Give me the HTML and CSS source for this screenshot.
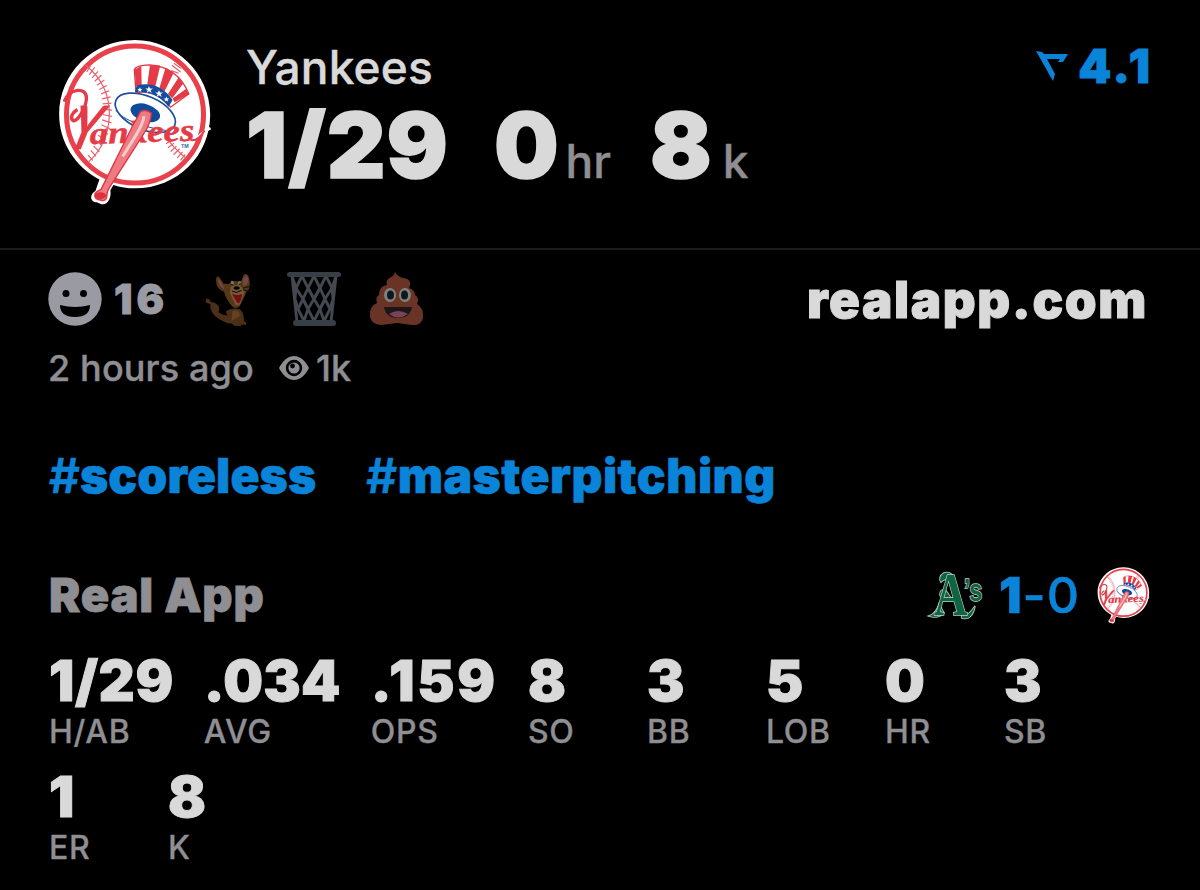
FILE: index.html
```
<!DOCTYPE html>
<html lang="en">
<head>
<meta charset="utf-8">
    <title>Yankees 1/29</title>
    <link rel="stylesheet" href="styles.css">
</head>
<body>
    <!-- shared logo, used in the header and next to the score -->
    <svg class="defs" width="0" height="0">
        <symbol id="yankees" viewBox="26 25 462 502">
            <path d="M257 28C380 28 483 130 483 252C483 377 383 474 257 474C234 474 212 471 192 464L183 480C186 500 178 522 160 522C150 522 148 516 138 516C120 512 122 490 138 482L150 447C78 410 29 335 29 252C29 128 130 28 257 28Z" fill="#fff"/>
            <circle cx="257" cy="252" r="206" fill="#fff" stroke="#e9414c" stroke-width="15"/>
            <g fill="none" stroke="#e9606a" stroke-width="3.500">
                <path d="M108 103Q180 160 180 250Q178 340 118 394"/>
                <path d="M112 124l12-20M120 132l16-22M128 142l18-20M136 152l20-18M143 164l22-16M150 177l22-12M155 190l24-9M158 205l26-6M160 220l26-2M160 236l28 3M160 252l28 6M158 268l28 9M156 283l26 12M152 298l24 13M146 314l22 14M140 330l18 16M132 346l18 18M124 360l16 18M116 374l14 16"/>
                <path d="M352 322Q372 352 412 384M368 104l26 20M374 98l22 16M366 120l22 8"/>
                <path d="M350 340l16-10M356 352l18-14M364 363l18-16M373 373l18-18M384 382l16-18M394 390l14-18"/>
            </g>
            <!-- hat -->
            <ellipse cx="288" cy="247" rx="96" ry="50" transform="rotate(23 288 247)" fill="#fff" stroke="#1e4fa0" stroke-width="5"/>
            <path d="M200 240C222 270 285 290 350 300" fill="none" stroke="#1e4fa0" stroke-width="3"/>
            <ellipse cx="288" cy="247" rx="46" ry="26" transform="rotate(18 288 247)" fill="#0f4a9b"/>
            <path d="M255 117Q260 104 300 103Q385 108 419 190L364 230Q322 176 260 186Z" fill="#fff" stroke="#e03542" stroke-width="4"/>
            <path d="M256 117L276 106L277 163L260 166ZM302 103L333 105L318 168L294 162ZM349 111L373 127L346 182L330 174ZM388 141L402 159L369 203L356 190ZM410 175L419 191L376 215L370 204Z" fill="#e43b46"/>
            <path d="M262 165Q327 148 370 208L358 229Q319 179 257 185Z" fill="#154c9e"/>
            <path d="M272 170l2 5 5 0-4 4 1 5-5-3-4 3 1-5-4-4 5 0ZM299 166l3 8 9 0-7 5 3 8-8-5-7 5 3-8-7-5 8 0ZM329 178l3 8 9 0-7 5 3 8-8-5-7 5 3-8-7-5 8 0ZM352 198l2 6 6 0-5 4 2 6-6-4-5 4 2-6-5-4 6 0Z" fill="#fff"/>
            <!-- lettering -->
            <g class="logo-script" fill="#e43b46" stroke="#e43b46">
                <text x="122" y="341" font-size="94" stroke-width="1.500" transform="rotate(-2 122 341)" textLength="314" lengthAdjust="spacingAndGlyphs">ankees</text>
                <text class="logo-y" font-size="180" stroke-width="1" transform="translate(42 356) skewX(-22)" textLength="86" lengthAdjust="spacingAndGlyphs">Y</text>
            </g>
            <path d="M44 213C60 172 112 168 111 203C110 232 82 280 69 269C60 258 73 244 84 237" fill="none" stroke="#e43b46" stroke-width="10"/>
            <path d="M440 323Q462 304 484 293" fill="none" stroke="#fff" stroke-width="7"/>
            <path d="M424 329Q447 333 466 300" fill="none" stroke="#e43b46" stroke-width="6"/>
            <!-- bat -->
            <path d="M273 244Q290 234 306 248Q305 277 282 312L180 472Q172 483 172 501Q168 514 154 509Q137 508 136 495Q136 485 155 477L252 282Q263 264 273 244Z" fill="#ee7b81" stroke="#e03542" stroke-width="4"/>
            <path d="M284 257Q282 278 260 314L220 378" fill="none" stroke="#fff" stroke-width="9" opacity=".6"/>
            <ellipse cx="153" cy="496" rx="17" ry="10" fill="#d9313e"/>
            <text x="395" y="353" class="logo-tm" font-size="16" fill="#1d6a9c">TM</text>
        </symbol>
    </svg>

    <header class="head">
        <svg class="head-logo"><use href="#yankees"/></svg>
        <div class="head-text">
            <div class="team">Yankees</div>
            <div class="line">
                <span class="big">1/29</span>
                <span class="big zero">0</span><span class="unit">hr</span>
                <span class="big eight">8</span><span class="unit unit-k">k</span>
            </div>
        </div>
        <div class="rating">
            <svg class="arrow" viewBox="0 0 32 32"><path d="M0 1L6 2L8 4H32L27 12H22L24 9H11L19 24L17 31Z" fill="#0a84d8"/></svg>
            <span>4.1</span>
        </div>
    </header>

    <section class="social">
        <div>
            <div class="reactions">
                <svg class="smile" viewBox="0 0 54 54">
                    <circle cx="27" cy="27" r="26.7" fill="#9a9aa3"/>
                    <circle cx="18" cy="21.5" r="3.5"/><circle cx="35.5" cy="21.5" r="3.5"/>
                    <path d="M12 33Q27 37 42 33Q42 45 27 45Q12 45 12 33Z"/>
                </svg>
                <span class="count">16</span>
                <svg class="mouse" viewBox="30 32 144 156">
                    <path d="M34 107Q44 108 47 117C74 120 75 139 69 147Q80 157 96 156L91 145Q109 132 133 139Q145 151 145 174Q154 178 151 186Q141 181 134 188L116 187L108 181L96 180C66 167 42 150 46 124L31 118Z" fill="#4b2f18"/>
                    <path d="M84 63Q66 30 63 47Q59 78 86 87Q91 110 111 131Q121 139 132 130Q142 111 152 87Q164 79 161 54Q157 28 143 38L135 60Q113 49 100 65Z" fill="#573719"/>
                    <path d="M69 48Q66 67 86 80Q86 67 69 48ZM147 43Q137 54 143 70Q158 69 157 49Q154 36 147 43Z" fill="#714842"/>
                    <path d="M107 66Q103 51 114 56L116 69ZM126 68Q126 51 136 57Q139 66 129 70Z" fill="#777756"/>
                    <path d="M106 72Q122 61 139 75L147 87L133 125L120 127L103 91Z" fill="#755735"/>
                    <path d="M109 93Q124 100 139 94Q135 128 124 119Z" fill="#730d10"/>
                    <ellipse cx="123" cy="76" rx="9" ry="5"/>
                    <path d="M106 65l8 3M129 66l8-3M109 85l14 4 15-6M141 77l30-8M142 82l25 5" fill="none" stroke="#15100b" stroke-width="3"/>
                    <path d="M111 144Q130 137 133 158L108 173" fill="#65411f"/>
                </svg>
                <svg class="basket" viewBox="0 0 54 54">
                    <g fill="none" stroke="#434950" stroke-width="2.800">
                        <path d="M5 4L10 50M49 4L44 50"/>
                        <path d="M15 4L9 16L16 27L11 37L17 49L21 37L16 27L21 16ZM27 4L21 16L27 27L21 37L27 49L33 37L27 27L33 16ZM39 4L33 16L38 27L33 37L37 49L43 37L38 27L45 16Z"/>
                        <path d="M5 4L9 16M49 4L45 16M21 16L27 27L33 16M16 27L21 37M38 27L33 37M9 16L8 27L11 37M45 16L46 27L43 37"/>
                    </g>
                    <rect x="0" y="0" width="54" height="5" rx="2.5" fill="#373e46"/>
                    <rect x="6" y="48" width="43" height="6" rx="3" fill="#373e46"/>
                </svg>
                <svg class="poop" viewBox="0 0 56 54">
                    <path d="M26 0Q25 4 22 5Q16 8 18 13Q10 14 10 23Q6 25 8 31Q0 34 1 45Q3 53 13 53L28 51L43 53Q52 54 54 46Q55 36 48 32Q51 26 46 23Q46 18 40 16Q44 7 34 6Q28 4 26 0Z" fill="#693425"/>
                    <ellipse cx="21" cy="23" rx="6" ry="7" fill="#82827d"/><ellipse cx="36" cy="23" rx="6" ry="7" fill="#82827d"/>
                    <ellipse cx="21.500" cy="23" rx="3.500" ry="4.500" fill="#0b1920"/><ellipse cx="35.500" cy="23" rx="3.500" ry="4.500" fill="#0b1920"/>
                    <path d="M15 35H43Q41 46 29 46Q17 46 15 35Z" fill="#1b1717"/>
                    <path d="M20 42Q29 36 39 42Q29 49 20 42Z" fill="#7c4355"/>
                </svg>
            </div>
            <div class="meta">
                <span class="ago">2 hours ago</span>
                <svg class="eye" viewBox="0 0 30 24">
                    <path d="M0 12C8-4 22-4 30 12C22 28 8 28 0 12Z" fill="#8e8e93"/>
                    <circle cx="15" cy="12" r="6.900" fill="none" stroke="#000" stroke-width="2.600"/>
                    <circle cx="13.500" cy="10" r="2.400"/>
                </svg>
                <span class="views">1k</span>
            </div>
        </div>
        <div class="site">realapp.com</div>
    </section>

    <div class="tags">
        <span><i>#</i>scoreless</span>
        <span class="wide"><i>#</i>masterpitching</span>
    </div>

    <div class="game">
        <div class="app">Real App</div>
        <div class="score">
            <svg class="athletics" viewBox="0 0 56 48">
                <g fill="#0e6542" stroke="#c1cec5" stroke-width="1.600" paint-order="stroke">
                    <path d="M25 6Q21 0 15 2Q9 6 12 11Q15 7 19 9L24 14ZM17 20Q11 17 11 24Q13 30 22 27ZM10 33Q7 43 0 45Q9 48 15 42Z"/>
                    <path d="M33 41Q37 49 46 35Q43 50 33 47Z"/>
                    <text class="as" transform="translate(5 44) scale(.76 1)" font-size="61">A<tspan class="as-s" font-size="31" dx="-5" dy="-14">’s</tspan></text>
                </g>
            </svg>
            <span class="result"><b>1</b>-0</span>
            <svg class="mini-logo"><use href="#yankees"/></svg>
        </div>
    </div>

    <div class="stats">
        <div class="stat hits"><b>1/29</b><span>H/AB</span></div>
        <div class="stat avg"><b>.034</b><span>AVG</span></div>
        <div class="stat ops"><b>.159</b><span>OPS</span></div>
        <div class="stat"><b>8</b><span>SO</span></div>
        <div class="stat"><b>3</b><span>BB</span></div>
        <div class="stat"><b>5</b><span>LOB</span></div>
        <div class="stat"><b>0</b><span>HR</span></div>
        <div class="stat"><b>3</b><span>SB</span></div>
        <div class="stat"><b>1</b><span>ER</span></div>
        <div class="stat"><b>8</b><span>K</span></div>
    </div>
</body>
</html>
```

FILE: styles.css
```
* {
    box-sizing: border-box;
}
body {
    margin: 0;
    background: #000;
    color: #d9d9d9;
    font-family: Inter, "Liberation Sans", sans-serif;
    overflow: hidden;
}
svg {
    display: block;
    flex: none;
}
.defs {
    display: none;
}
.head {
    display: flex;
    height: 250px;
    padding: 39px 47px 0 58px;
    border-bottom: 2px solid #1b1b1d;
}
.head-logo {
    width: 154px;
    height: 167px;
}
.head-text {
    flex: 1;
    padding-left: 34px;
}
.team {
    font-size: 46px;
    line-height: 56px;
    font-weight: 500;
    letter-spacing: .2px;
    -webkit-text-stroke: .4px;
}
.line {
    display: flex;
    align-items: baseline;
    margin-top: 4px;
}
.big {
    font-size: 91px;
    line-height: 92px;
    font-weight: 900;
    letter-spacing: 1px;
    -webkit-text-stroke: 1.5px;
}
.zero {
    margin-left: 45px;
}
.eight {
    margin-left: 39px;
}
.unit {
    margin-left: 6px;
    font-size: 46px;
    font-weight: 500;
    color: #8e8e93;
    -webkit-text-stroke: .4px;
}
.unit-k {
    margin-left: 10px;
}
.rating {
    display: flex;
    align-items: center;
    height: 56px;
    gap: 10px;
    color: #0a84d8;
    font-size: 47px;
    line-height: 56px;
    font-weight: 900;
    letter-spacing: 3px;
    -webkit-text-stroke: 1px;
}
.rating span {
    margin-top: -2px;
}
.arrow {
    width: 32px;
    height: 32px;
    margin-top: -3px;
}
.social {
    display: flex;
    justify-content: space-between;
    padding: 22px 52px 0 48px;
}
.reactions {
    display: flex;
    align-items: center;
    height: 54px;
}
.smile {
    width: 54px;
    height: 54px;
}
.count {
    width: 92px;
    padding-left: 12px;
    font-size: 41px;
    font-weight: 900;
    letter-spacing: 4px;
    color: #9a9aa3;
    -webkit-text-stroke: .8px;
}
.mouse {
    width: 49px;
    height: 53px;
    margin-left: 11px;
}
.basket {
    width: 54px;
    height: 54px;
    margin-left: 33px;
}
.poop {
    width: 56px;
    height: 54px;
    margin-left: 28px;
}
.meta {
    display: flex;
    align-items: center;
    margin-top: 20px;
    line-height: 44px;
    font-size: 36px;
    font-weight: 500;
    color: #8e8e93;
    letter-spacing: .15px;
    -webkit-text-stroke: .4px;
}
.eye {
    width: 30px;
    height: 24px;
    margin: 0 7px 0 25px;
}
.site {
    line-height: 56px;
    font-size: 51px;
    font-weight: 900;
    letter-spacing: 1.6px;
    -webkit-text-stroke: 1px;
}
.tags {
    display: flex;
    gap: 50px;
    padding: 56px 49px 0;
    line-height: 60px;
    font-size: 48px;
    font-weight: 900;
    letter-spacing: .1px;
    color: #0a84d8;
    -webkit-text-stroke: .6px;
}
.tags .wide {
    letter-spacing: .5px;
}
.tags i {
    font-style: normal;
    font-weight: 600;
}
.game {
    display: flex;
    justify-content: space-between;
    height: 58px;
    margin-top: 60px;
    padding: 0 50px 0 49px;
    line-height: 58px;
}
.app {
    font-size: 47px;
    font-weight: 900;
    letter-spacing: .8px;
    color: #8e8e93;
    -webkit-text-stroke: .8px;
}
.score {
    display: flex;
    align-items: center;
}
.athletics {
    width: 56px;
    height: 48px;
    overflow: visible;
}
.result {
    margin: 0 17px 0 14px;
    font-size: 50px;
    font-weight: 500;
    letter-spacing: 1px;
    color: #0a84d8;
    -webkit-text-stroke: .5px;
}
.result b {
    font-weight: 900;
}
.mini-logo {
    width: 53px;
    height: 57px;
}
.logo-script {
    font-family: "Liberation Serif", serif;
    font-style: italic;
    font-weight: bold;
}
.logo-y {
    font-family: Lato, sans-serif;
    font-style: normal;
}
.logo-tm,
.as-s {
    font-family: "Liberation Sans", sans-serif;
    font-weight: bold;
}
.as {
    font-family: "Liberation Serif", serif;
    font-weight: bold;
}
.stats {
    display: flex;
    flex-wrap: wrap;
    gap: 13px 30px;
    padding: 25px 49px 0;
}
.stat {
    min-width: 89px;
}
.stat b {
    display: block;
    line-height: 64px;
    font-size: 56px;
    font-weight: 900;
    -webkit-text-stroke: 1px;
}
.hits b {
    letter-spacing: .6px;
}
.avg b {
    letter-spacing: .3px;
}
.ops b {
    letter-spacing: 2.8px;
}
.stat span {
    display: block;
    line-height: 38px;
    padding-bottom: 1px;
    font-size: 32px;
    font-weight: 500;
    letter-spacing: .7px;
    color: #8e8e93;
    -webkit-text-stroke: .3px;
}
```
